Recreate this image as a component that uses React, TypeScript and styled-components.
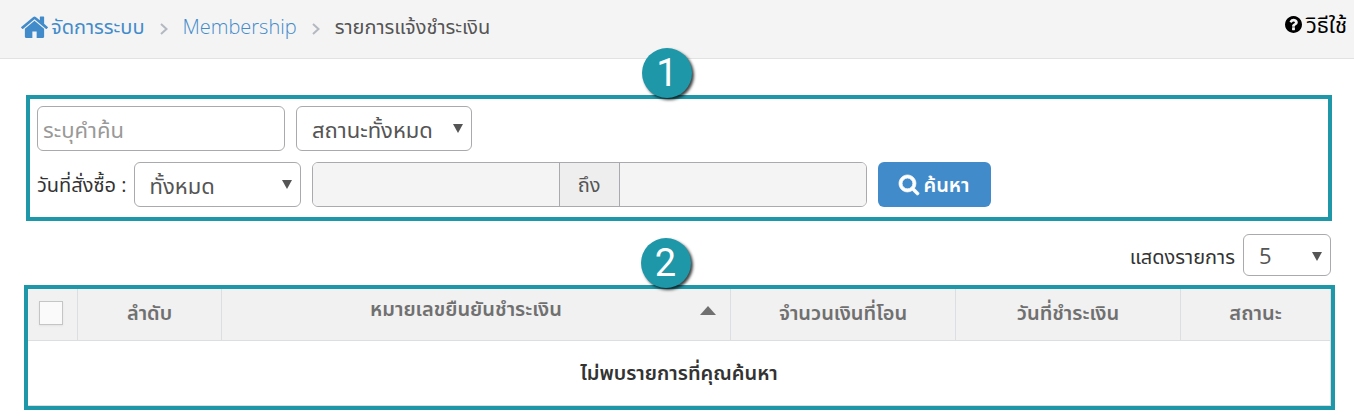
import React from "react";
import styled, { createGlobalStyle } from "styled-components";

const teal = "#1e97a8";
const blue = "#428bca";
const line = "#dcdfe2";
const fieldLine = "#aaaaae";
const font = '"Open Sans", "Noto Sans", "Noto Sans Thai", sans-serif';

const GlobalStyle = createGlobalStyle`
  *, *::before, *::after { box-sizing: border-box; }
  body { margin: 0; background: #fff; color: #333; font-family: ${font}; font-size: 20px; line-height: 24px; }
  input, select, button { font: inherit; margin: 0; }
`;

const Header = styled.header`
  display: flex;
  justify-content: space-between;
  align-items: flex-start;
  height: 59px;
  padding: 12px 7px 0 21px;
  background: #f4f4f4;
  border-bottom: 1px solid #e2e2e2;
`;

const Breadcrumb = styled.nav`
  display: flex;
  align-items: center;
  height: 30px;
`;

const Crumb = styled.a<{ $light?: boolean }>`
  display: flex;
  align-items: center;
  gap: 3px;
  color: ${blue};
  text-decoration: none;
  font-weight: ${(p) => (p.$light ? 300 : 400)};
`;

const Current = styled.span`
  color: #555;
`;

const Separator = styled.svg`
  width: 8px;
  height: 12px;
  margin: 4px 15px 0;
  fill: none;
  stroke: #b4b8c0;
  stroke-width: 2;
`;

const HelpLink = styled.a`
  display: flex;
  align-items: center;
  gap: 4px;
  color: #000;
  text-decoration: none;
  font-size: 22px;
`;

const Icon = styled.svg<{ $w: number; $h: number }>`
  flex: none;
  width: ${(p) => p.$w}px;
  height: ${(p) => p.$h}px;
  fill: currentColor;
`;

const Frame = styled.section`
  position: relative;
  border: 4px solid ${teal};
`;

const Badge = styled.span<{ $shift: number }>`
  position: absolute;
  left: calc(50% - ${(p) => p.$shift}px);
  top: -51px;
  width: 50px;
  height: 50px;
  border-radius: 50%;
  background: ${teal};
  box-shadow: 2px 2px 3px rgba(0, 0, 0, 0.75);
  color: #fff;
  font-family: Roboto, sans-serif;
  font-size: 38px;
  line-height: 50px;
  text-align: center;
`;

const Filters = styled(Frame)`
  margin: 36px 22px 0 26px;
`;

const FilterForm = styled.form`
  display: flex;
  flex-direction: column;
  gap: 11px;
  padding: 7px 7px 10px;
`;

const Row = styled.div<{ $gap: number }>`
  display: flex;
  align-items: center;
  gap: ${(p) => p.$gap}px;
`;

const Keyword = styled.input`
  width: 248px;
  height: 45px;
  padding: 0 5px;
  border: 1px solid ${fieldLine};
  border-radius: 6px;
  background: #fff;
  font-size: 22px;
  &::placeholder { color: #999; opacity: 1; }
`;

const SelectBox = styled.span<{ $width: number; $height: number }>`
  display: grid;
  flex: none;
  width: ${(p) => p.$width}px;
  height: ${(p) => p.$height}px;
  & > * { grid-area: 1 / 1; }
`;

const SelectControl = styled.select`
  appearance: none;
  width: 100%;
  padding: 0 15px;
  border: 1px solid ${fieldLine};
  border-radius: 6px;
  background: #fff;
  color: #555;
  font-size: 22px;
`;

const Arrow = styled.svg`
  width: 10px;
  height: 9px;
  margin: 18px 9px 0 0;
  justify-self: end;
  pointer-events: none;
  fill: #555;
`;

const Label = styled.label`
  white-space: nowrap;
`;

const DateRange = styled.div`
  display: flex;
  height: 45px;
  margin: 0 4px;
  border: 1px solid ${fieldLine};
  border-radius: 6px;
  overflow: hidden;
`;

const DateInput = styled.input`
  width: 246px;
  padding: 0 8px;
  border: 0;
  background: #f4f4f4;
`;

const Until = styled.span`
  width: 61px;
  border: solid ${fieldLine};
  border-width: 0 1px;
  background: #eee;
  color: #555;
  line-height: 43px;
  text-align: center;
`;

const SearchButton = styled.button`
  display: flex;
  align-items: center;
  justify-content: center;
  gap: 5px;
  width: 113px;
  height: 45px;
  padding: 0;
  border: 0;
  border-radius: 6px;
  background: ${blue};
  color: #fff;
  font-weight: 600;
`;

const SearchIcon = styled(Icon)`
  stroke: currentColor;
  stroke-width: 60px;
  overflow: visible;
`;

const PageSize = styled.div`
  display: flex;
  justify-content: flex-end;
  align-items: center;
  gap: 8px;
  padding: 13px 23px 9px;

  ${Label} { padding-top: 4px; }
`;

const Results = styled(Frame)`
  margin: 0 19px 6px 24px;
`;

const Table = styled.table`
  width: 100%;
  table-layout: fixed;
  border-collapse: separate;
  border-spacing: 0;
  border-right: 1px solid ${line};
  border-bottom: 1px solid ${line};
`;

const HeadCell = styled.th<{ $width?: number }>`
  width: ${(p) => (p.$width ? p.$width + "px" : "auto")};
  height: 52px;
  padding: 0 10px 4px;
  border-bottom: 1px solid ${line};
  background: #f1f1f1;
  color: #707070;
  font-weight: 600;
  & + & { border-left: 1px solid ${line}; }
`;

const SortButton = styled.button`
  display: grid;
  grid-template-columns: 1fr 16px;
  align-items: center;
  width: 100%;
  padding: 0 4px 8px 0;
  border: 0;
  background: none;
  color: inherit;
`;

const SortArrow = styled.svg`
  width: 16px;
  height: 9px;
  margin-top: 4px;
  fill: currentColor;
`;

const CheckBox = styled.input`
  appearance: none;
  display: block;
  width: 24px;
  height: 24px;
  margin-left: 1px;
  border: 1px solid #c4c6c6;
  background: #fafafa;
  box-shadow: 0 1px 2px rgba(0, 0, 0, 0.06);
`;

const EmptyCell = styled.td`
  height: 64px;
  padding: 0;
  text-align: center;
  font-weight: 600;
`;

function Select({ id, label, width, height, options }: {
  id: string; label?: string; width: number; height: number; options: string[];
}) {
  return (
    <SelectBox $width={width} $height={height}>
      <SelectControl id={id} aria-label={label}>
        {options.map((o) => <option key={o}>{o}</option>)}
      </SelectControl>
      <Arrow viewBox="0 0 10 9" aria-hidden="true"><path d="M0 0h10L5 9z" /></Arrow>
    </SelectBox>
  );
}

function Chevron() {
  return <Separator viewBox="0 0 8 12" aria-hidden="true"><path d="M1 1l5.500 5L1 11" /></Separator>;
}

export default function App() {
  return (
    <>
      <GlobalStyle />
      <Header>
        <Breadcrumb>
          <Crumb href="#system">
            <Icon $w={27} $h={22} viewBox="88 232 1616 1306" aria-hidden="true">
              <path d="M1472 992v480q0 26-19 45t-45 19h-384v-384h-256v384h-384q-26 0-45-19t-19-45v-480q0-1 .5-3t.5-3l575-474 575 474q1 2 1 6zm223-69l-62 74q-8 9-21 11h-3q-13 0-21-7l-692-577-692 577q-12 8-24 7-13-2-21-11l-62-74q-8-10-7-23.500t11-21.500l719-599q32-26 76-26t76 26l244 204v-195q0-14 9-23t23-9h192q14 0 23 9t9 23v408l219 182q10 8 11 21.500t-7 23.500z" />
            </Icon>
            จัดการระบบ
          </Crumb>
          <Chevron />
          <Crumb href="#membership" $light>Membership</Crumb>
          <Chevron />
          <Current aria-current="page">รายการแจ้งชำระเงิน</Current>
        </Breadcrumb>
        <HelpLink href="#help">
          <Icon $w={17} $h={17} viewBox="128 128 1536 1536" aria-hidden="true">
            <path d="M1024 1376v-192q0-14-9-23t-23-9h-192q-14 0-23 9t-9 23v192q0 14 9 23t23 9h192q14 0 23-9t9-23zm256-672q0-88-55.500-163t-138.500-116-170-41q-243 0-371 213-15 24 8 42l132 100q7 6 19 6 16 0 25-12 53-68 86-92 34-24 86-24 48 0 85.500 26t37.500 59q0 38-20 61t-68 45q-63 28-115.500 86.500t-52.500 125.500v36q0 14 9 23t23 9h192q14 0 23-9t9-23q0-19 21.500-49.500t54.500-49.500q32-18 49-28.500t46-35 44.500-48 28-60.500 12.500-81zm384 192q0 209-103 385.500t-279.500 279.500-385.500 103-385.500-103-279.500-279.500-103-385.500 103-385.500 279.500-279.500 385.500-103 385.500 103 279.500 279.500 103 385.500z" />
          </Icon>
          วิธีใช้
        </HelpLink>
      </Header>

      <main>
        <Filters aria-label="ค้นหา">
          <Badge $shift={37}>1</Badge>
          <FilterForm onSubmit={(e) => e.preventDefault()}>
            <Row $gap={11}>
              <Keyword type="text" placeholder="ระบุคำค้น" aria-label="ระบุคำค้น" />
              <Select id="status" label="สถานะ" width={176} height={45} options={["สถานะทั้งหมด"]} />
            </Row>
            <Row $gap={7}>
              <Label htmlFor="period">วันที่สั่งซื้อ :</Label>
              <Select id="period" width={167} height={45} options={["ทั้งหมด"]} />
              <DateRange>
                <DateInput type="text" aria-label="วันที่สั่งซื้อ" disabled />
                <Until>ถึง</Until>
                <DateInput type="text" aria-label="ถึง" disabled />
              </DateRange>
              <SearchButton type="submit">
                <SearchIcon $w={20} $h={20} viewBox="64 128 1664 1664" aria-hidden="true">
                  <path d="M1216 832q0-185-131.500-316.500t-316.500-131.500-316.500 131.500-131.500 316.500 131.500 316.500 316.500 131.500 316.500-131.500 131.500-316.500zm512 832q0 52-38 90t-90 38q-54 0-90-38l-343-342q-179 124-399 124-143 0-273.500-55.500t-225-150-150-225-55.500-273.500 55.500-273.500 150-225 225-150 273.500-55.500 273.500 55.500 225 150 150 225 55.500 273.500q0 220-124 399l343 343q37 37 37 90z" />
                </SearchIcon>
                ค้นหา
              </SearchButton>
            </Row>
          </FilterForm>
        </Filters>

        <PageSize>
          <Label htmlFor="page-size">แสดงรายการ</Label>
          <Select id="page-size" width={88} height={42} options={["5"]} />
        </PageSize>

        <Results aria-label="รายการแจ้งชำระเงิน">
          <Badge $shift={39}>2</Badge>
          <Table>
            <thead>
              <tr>
                <HeadCell $width={49}><CheckBox type="checkbox" aria-label="เลือกทั้งหมด" /></HeadCell>
                <HeadCell $width={144}>ลำดับ</HeadCell>
                <HeadCell aria-sort="ascending">
                  <SortButton type="button">
                    <span>หมายเลขยืนยันชำระเงิน</span>
                    <SortArrow viewBox="0 0 16 9" aria-hidden="true"><path d="M0 9L8 0l8 9z" /></SortArrow>
                  </SortButton>
                </HeadCell>
                <HeadCell $width={225}>จำนวนเงินที่โอน</HeadCell>
                <HeadCell $width={225}>วันที่ชำระเงิน</HeadCell>
                <HeadCell $width={150}>สถานะ</HeadCell>
              </tr>
            </thead>
            <tbody>
              <tr><EmptyCell colSpan={6}>ไม่พบรายการที่คุณค้นหา</EmptyCell></tr>
            </tbody>
          </Table>
        </Results>
      </main>
    </>
  );
}
